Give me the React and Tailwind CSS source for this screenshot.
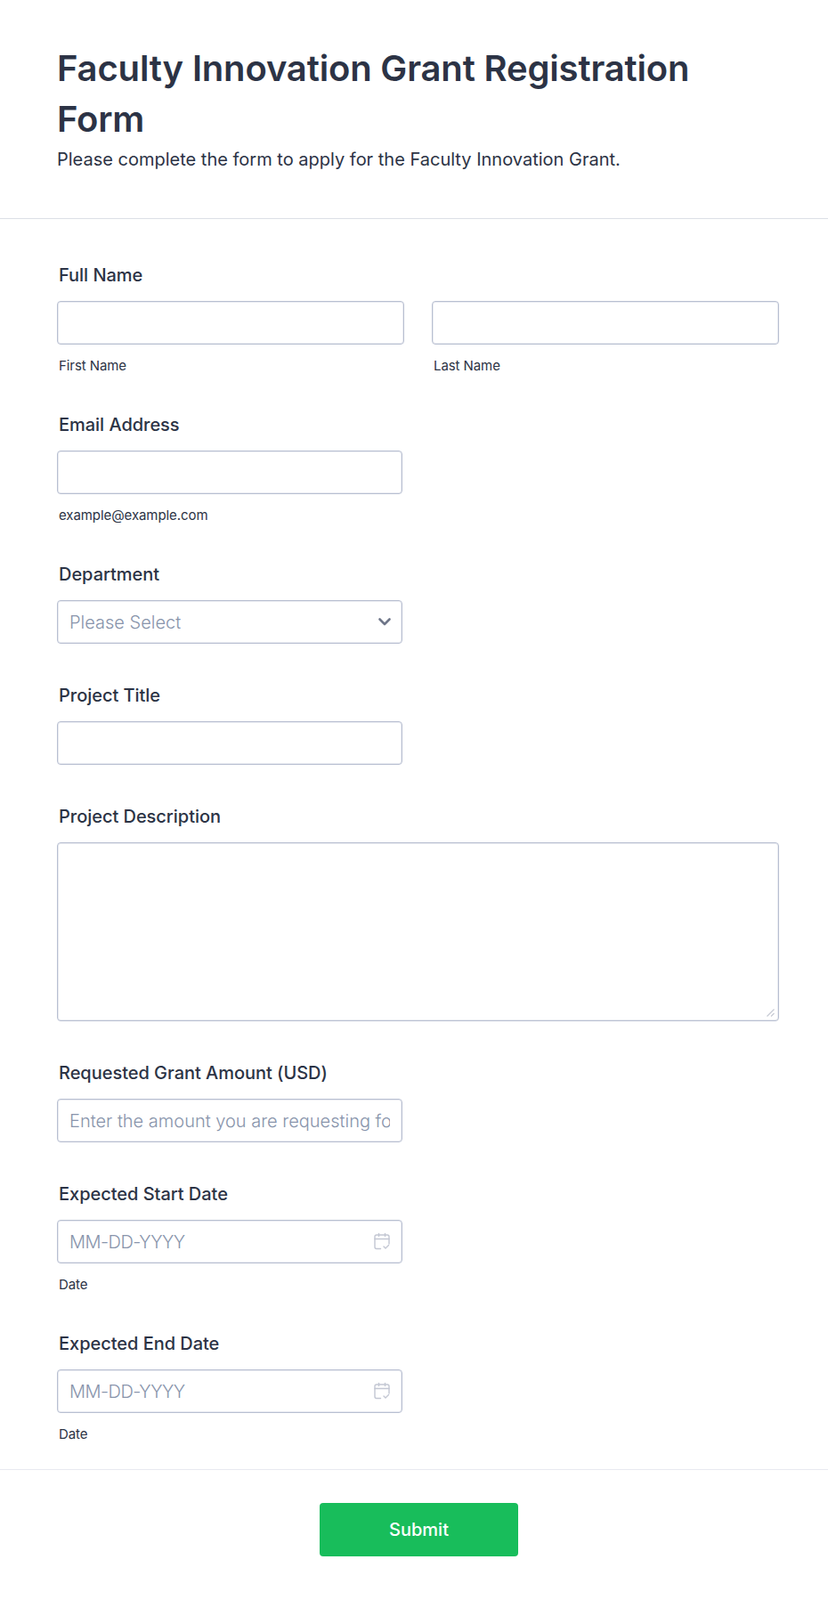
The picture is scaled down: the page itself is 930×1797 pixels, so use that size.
import React from "react";

const boxCls = "rounded-[4px] border border-[#b8bfd1] bg-white px-[13px] shadow-[inset_0_0_0_1px_#e9ebf1] outline-none";
const inputCls = "block h-[49px] w-full text-[20px] font-light text-[#2c3345] placeholder:text-[#8894ab] " + boxCls;

function Label({ children }) {
  return <label className="mb-[15px] block pl-[2px] text-[20px] leading-[28px] tracking-[-0.03px] font-medium text-[#2c3345]">{children}</label>;
}
function Sub({ children }) {
  return <div className="mt-[15px] pl-[2px] text-[15px] leading-[17px] tracking-[-0.08px] text-[#2c3345]">{children}</div>;
}
function Cal() {
  return (
    <svg className="absolute right-[13px] top-[14px]" width="20" height="20" viewBox="0 0 20 20" fill="none" stroke="#c3c7d3" strokeWidth="1.4" strokeLinecap="round" strokeLinejoin="round">
      <path d="M8.5 18.5H4a2 2 0 0 1-2-2V5a2 2 0 0 1 2-2h12a2 2 0 0 1 2 2v8" />
      <path d="M2 7.5h16M6.5 1.5v3M13.5 1.5v3" />
      <path d="M12 16l2 2 3.5-3.5" />
    </svg>
  );
}
function DateField({ label }) {
  return (
    <div className="w-[388px]">
      <Label>{label}</Label>
      <div className="relative">
        <input className={inputCls + " tracking-[-0.5px]"} placeholder="MM-DD-YYYY" readOnly />
        <Cal />
      </div>
      <Sub>Date</Sub>
    </div>
  );
}

export default function App() {
  return (
    <div className="min-h-[1797px] bg-white font-['Inter',sans-serif] text-[#2c3345]">
      <header className="h-[246px] border-b border-[#dcdfe6] px-[64px] pt-[48px]">
        <h1 className="text-[40px] leading-[57px] tracking-[-0.16px] font-semibold text-[#2c3345]">Faculty Innovation Grant Registration Form</h1>
        <p className="mt-[2px] text-[20px] leading-[30px] text-[#2c3345]">Please complete the form to apply for the Faculty Innovation Grant.</p>
      </header>

      <main className="flex flex-col gap-[44px] pl-[64px] pr-[55px] pt-[49px]">
        <div>
          <Label>Full Name</Label>
          <div className="flex gap-[31px]">
            <div className="flex-1">
              <input className={inputCls} readOnly />
              <Sub>First Name</Sub>
            </div>
            <div className="flex-1">
              <input className={inputCls} readOnly />
              <Sub>Last Name</Sub>
            </div>
          </div>
        </div>

        <div className="w-[388px]">
          <Label>Email Address</Label>
          <input className={inputCls} readOnly />
          <Sub>example@example.com</Sub>
        </div>

        <div className="w-[388px]">
          <Label>Department</Label>
          <div className={inputCls + " flex items-center justify-between"}>
            <span className="text-[#8894ab]">Please Select</span>
            <svg width="16" height="11" viewBox="0 0 16 11" fill="none" stroke="#6f7689" strokeWidth="2.6" strokeLinecap="round" strokeLinejoin="round" className="-mr-[2px]">
              <path d="M2.5 2.5l5.5 5.5 5.5-5.5" />
            </svg>
          </div>
        </div>

        <div className="w-[388px]">
          <Label>Project Title</Label>
          <input className={inputCls} readOnly />
        </div>

        <div>
          <Label>Project Description</Label>
          <div className="relative">
            <textarea className={"block h-[201px] w-full resize-none " + boxCls} readOnly />
            <svg className="absolute right-[5px] bottom-[5px]" width="9" height="9" viewBox="0 0 9 9" fill="none" stroke="#c6c9d4" strokeWidth="1.2">
              <path d="M0.5 8.5L8.5 0.5M5 8.5L8.5 5" />
            </svg>
          </div>
        </div>

        <div className="w-[388px]">
          <Label>Requested Grant Amount (USD)</Label>
          <input className={inputCls} placeholder="Enter the amount you are requesting for" readOnly />
        </div>

        <DateField label="Expected Start Date" />
        <DateField label="Expected End Date" />
      </main>

      <footer className="mt-[31px] flex justify-center border-t border-[#e9eaf0] pt-[37px]">
        <button className="ml-[11px] h-[60px] w-[223px] rounded-[4px] bg-[#18bd5b] text-[20px] font-medium text-white">Submit</button>
      </footer>
    </div>
  );
}
